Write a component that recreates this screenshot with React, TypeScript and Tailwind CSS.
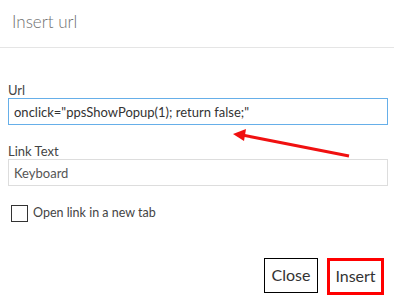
export default function App() {
  return (
    <div className="h-[305px] w-[394px] bg-white font-['Lato',sans-serif] text-[#333]">
      <header className="h-[48px] border-b border-[#e5e5e5] px-3 pt-[9px]">
        <h1 className="text-[17px] font-light text-[#6f6f6f]">Insert url</h1>
      </header>

      <div className="relative px-2 pt-[34px]">
        <label className="block text-[13px] leading-[16px] text-[#444]">Url</label>
        <input
          readOnly
          value={'onclick="ppsShowPopup(1); return false;"'}
          className="block h-[27px] w-[380px] border border-[#66afe9] px-[5px] text-[13px] text-[#333] outline-none"
        />

        <label className="mt-[18px] block text-[13px] leading-[16px] text-[#444]">Link Text</label>
        <input
          readOnly
          value="Keyboard"
          className="block h-[27px] w-[380px] border border-[#ddd] px-[5px] text-[13px] text-[#555] outline-none"
        />

        <label className="mt-[18px] flex items-center gap-[5px] pl-[3px] text-[12.5px] text-[#444]">
          <span className="block h-[17px] w-[17px] border border-[#333]" />
          Open link in a new tab
        </label>

        {/* red annotation arrow */}
        <svg className="absolute left-[226px] top-[78px]" width="130" height="36" viewBox="0 0 130 36">
          <line x1="123" y1="30" x2="16" y2="9" stroke="#f01010" strokeWidth="3" />
          <polygon points="7,8 20,3 18,15" fill="#f01010" />
        </svg>
      </div>

      <div className="mt-[35px] flex justify-end gap-[9px] pr-[10px]">
        <button className="h-[35px] w-[54px] border border-black text-[16px] text-[#333]">Close</button>
        <button className="h-[37px] w-[57px] border-[3px] border-[#f00] text-[16px] text-[#333]">Insert</button>
      </div>
    </div>
  );
}
